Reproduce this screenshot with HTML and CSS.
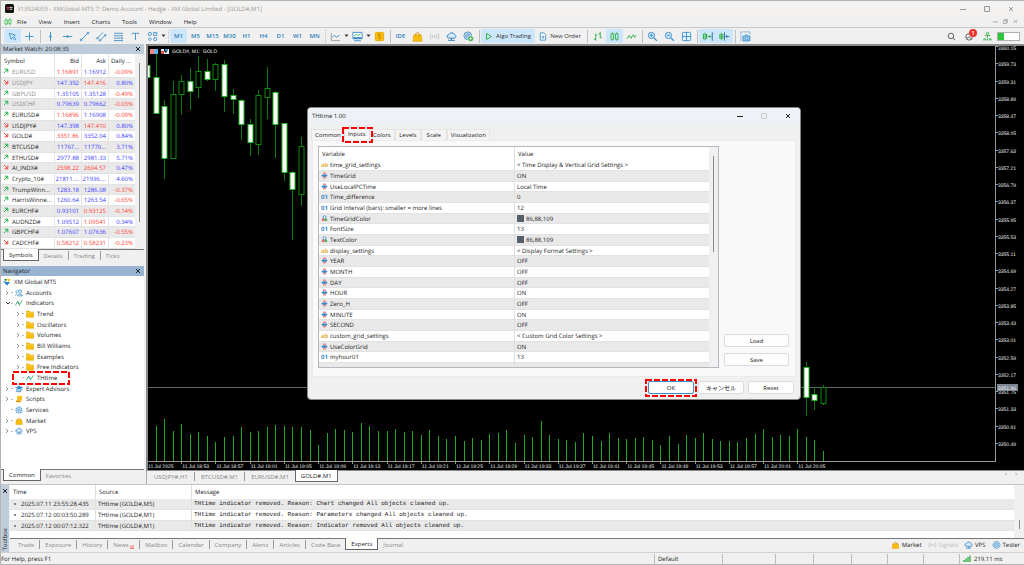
FILE: index.html
```html
<!DOCTYPE html>
<html lang="en">

<head>
    <meta charset="UTF-8">
    <meta name="viewport" content="width=device-width, initial-scale=1.0">
    <title>XMGlobal-MT5 7</title>
    <link rel="stylesheet" href="styles.css">
</head>

<body>
    <svg class="sprite" aria-hidden="true">
        <symbol id="up" viewBox="0 0 6 6"><path d="M1 5 4.6 1.4M1.6 1.2H4.8V4.4" fill="none" stroke="#22b14c"/></symbol>
        <symbol id="down" viewBox="0 0 6 6"><path d="M1 1 4.6 4.6M4.8 1.6V4.8H1.6" fill="none" stroke="#f0433a"/></symbol>
        <symbol id="close" viewBox="0 0 6 6"><path d="M1 1 5 5M5 1 1 5" fill="none" stroke="currentColor"/></symbol>
        <symbol id="min" viewBox="0 0 6 6"><path d="M0 3.5H6" stroke="currentColor"/></symbol>
        <symbol id="max" viewBox="0 0 6 6"><path d="M.5 .5H5.5V5.5H.5Z" fill="none" stroke="currentColor"/></symbol>
        <symbol id="restore" viewBox="0 0 6 6"><path d="M.5 2H4V5.5H.5ZM2 1.8V.5H5.5V4H4.2" fill="none" stroke="currentColor" stroke-width=".9"/></symbol>
        <symbol id="chev" viewBox="0 0 4 6"><path d="M1 1 3 3 1 5" fill="none" stroke="#777" stroke-width=".8"/></symbol>
        <symbol id="chevdown" viewBox="0 0 6 4"><path d="M1 1 3 3 5 1" fill="none" stroke="#333"/></symbol>
        <symbol id="caret" viewBox="0 0 5 4"><path d="M.5 .5H4.5L2.5 3Z" fill="#333"/></symbol>
        <symbol id="folder" viewBox="0 0 9 9"><path d="M.5 1H3.6L4.6 2.2H8.5V8.2H.5Z" fill="#f7bd0a" stroke="#e0a200" stroke-width=".6"/><path d="M.6 3.2H8.4" stroke="#fbe08a" stroke-width=".6"/></symbol>
        <symbol id="indicator" viewBox="0 0 9 9"><path d="M.6 6.6 3 2.6 5 6.4 8.2 1.6" fill="none" stroke="#35b04a"/><path d="M3 2.6 5 6.4" stroke="#3c87c7"/><path d="M.6 7.6H1.6M5 7.6H6" stroke="#3c87c7" stroke-width=".7"/></symbol>
        <symbol id="users" viewBox="0 0 9 9"><circle cx="5.6" cy="2.6" r="1.8" fill="#d5eafa" stroke="#3f8fca" stroke-width=".8"/><path d="M2.8 7.8C3 5 8.3 5 8.6 7.8Z" fill="#d5eafa" stroke="#3f8fca" stroke-width=".8"/><path d="M3 2A1.4 1.4 0 1 0 3 4.6M.4 7.8C.4 6.4 1.2 5.8 2.4 5.6" fill="none" stroke="#3f8fca" stroke-width=".8"/></symbol>
        <symbol id="expert" viewBox="0 0 9 9"><path d="M0 3 4.6 1 9 2.6 5 4.8Z" fill="#2f84c6"/><path d="M2 4.4V7.6H6.4V4.6" fill="#a9d3f2" stroke="#2f84c6" stroke-width=".8"/><path d="M7.8 3.4V6.4" stroke="#2f84c6" stroke-width=".7"/></symbol>
        <symbol id="script" viewBox="0 0 9 9"><path d="M2.4 1H8V6.4H2.4Z" fill="#f9c21a"/><path d="M.8 6.2H6.4V8.2H1.6Q.8 7.6 .8 6.2Z" fill="#dd9a00"/></symbol>
        <symbol id="gear" viewBox="0 0 9 9"><circle cx="4.5" cy="4.5" r="3.4" fill="#d5eafa" stroke="#3f8fca" stroke-dasharray="1.6 .7" stroke-width="1.2"/><circle cx="4.5" cy="4.5" r="1.4" fill="#fff" stroke="#3f8fca" stroke-width=".9"/></symbol>
        <symbol id="bag" viewBox="0 0 9 9"><path d="M1.4 3.2H7.6L8.2 8.4H.8Z" fill="#f9bd0c" stroke="#e09e00" stroke-width=".5"/><path d="M3 4V2.2Q4.5 0 6 2.2V4" fill="none" stroke="#d99400" stroke-width=".8"/></symbol>
        <symbol id="cloud" viewBox="0 0 10 9"><path d="M2.6 6H8A1.7 1.7 0 0 0 8 2.9 3 3 0 0 0 2.6 2.8 1.6 1.6 0 0 0 2.6 6Z" fill="#d5eafa" stroke="#3585c2" stroke-width=".9"/><path d="M5 6V8M2 8H8" stroke="#3585c2" stroke-width=".9"/></symbol>
        <symbol id="signals" viewBox="0 0 10 9"><circle cx="5" cy="4.5" r=".8" fill="#bbb"/><path d="M3.3 2.8Q2.3 4.5 3.3 6.2M6.7 2.8Q7.7 4.5 6.7 6.2M1.8 1.8Q0 4.5 1.8 7.2M8.2 1.8Q10 4.5 8.2 7.2" fill="none" stroke="#bbb" stroke-width=".7"/></symbol>
        <symbol id="tester" viewBox="0 0 9 9"><circle cx="4.5" cy="4.5" r="3.8" fill="#fff" stroke="#3585c2" stroke-width="1.1" stroke-dasharray="1.8 .5"/><rect x="2.4" y="2.4" width="4.2" height="4.2" rx="1" fill="#9fd0f5" stroke="#3585c2" stroke-width=".7"/></symbol>
        <symbol id="bool" viewBox="0 0 7 7"><path d="M2 .6H5V2.6H2ZM2 4.6H5V6.6H2Z" fill="#ef8d92"/><path d="M.4 3.6 1.6 2.4H5.4L6.6 3.6 5.4 4.8H1.6Z" fill="#3b87c9"/></symbol>
        <symbol id="rgb" viewBox="0 0 7 7"><circle cx="3.5" cy="2.3" r="1.5" fill="#fff" stroke="#3b87c9" stroke-width=".9"/><circle cx="2.2" cy="4.7" r="1.5" fill="#e8696c"/><circle cx="4.9" cy="4.7" r="1.5" fill="#54b368"/></symbol>
    </svg>

    <header class="titlebar">
        <svg class="app-logo" viewBox="0 0 9 9"><rect width="9" height="9" rx="1.5" fill="#111"/><path d="M1.5 3.4H4.5M1.5 5H4" stroke="#d33" stroke-width="1"/><path d="M4.6 3.4H7.6M4.6 5.2H7.4" stroke="#ddd" stroke-width="1"/></svg>
        <span>313924059 - XMGlobal-MT5 7: Demo Account - Hedge - XM Global Limited - [GOLD#,M1]</span>
        <div class="win-buttons">
            <button aria-label="Minimize"><svg><use href="#min"/></svg></button>
            <button aria-label="Maximize"><svg><use href="#max"/></svg></button>
            <button aria-label="Close"><svg><use href="#close"/></svg></button>
        </div>
    </header>

    <nav class="menubar">
        <svg class="menu-logo" viewBox="0 0 8 8"><path d="M1 2H3.4V6H1ZM4.8 1.6H7V5.6H4.8ZM2.2 .6V2M2.2 6V7.6M5.9 .2V1.6M5.9 5.6V7.4" fill="none" stroke="#35c04a" stroke-width=".8"/></svg>
        <button>File</button>
        <button>View</button>
        <button>Insert</button>
        <button>Charts</button>
        <button>Tools</button>
        <button>Window</button>
        <button>Help</button>
        <div class="mdi-buttons">
            <button aria-label="Minimize chart"><svg><use href="#min"/></svg></button>
            <button aria-label="Restore chart"><svg><use href="#restore"/></svg></button>
            <button aria-label="Close chart"><svg><use href="#close"/></svg></button>
        </div>
    </nav>

    <div class="toolbar">
        <button class="tool active" aria-label="Cursor"><svg viewBox="0 0 12 12"><path d="M2.5 2.5 9 4.5 7.2 6 9.6 8.6 8.4 9.8 6 7.2 4.6 9Z"/></svg></button>
        <button class="tool" aria-label="Crosshair"><svg viewBox="0 0 12 12"><path d="M6 1.5V10.5M1.5 6H10.5"/></svg></button>
        <span class="sep"></span>
        <button class="tool" aria-label="Vertical line"><svg viewBox="0 0 12 12"><path d="M6 1V11"/><circle cx="6" cy="6" r="1"/></svg></button>
        <button class="tool" aria-label="Horizontal line"><svg viewBox="0 0 12 12"><path d="M1 6H11"/><circle cx="6" cy="6" r="1"/></svg></button>
        <button class="tool" aria-label="Trendline"><svg viewBox="0 0 12 12"><path d="M2.4 9.6 9.6 2.4"/><circle cx="2.2" cy="9.8" r="1"/><circle cx="9.8" cy="2.2" r="1"/></svg></button>
        <button class="tool" aria-label="Channel"><svg viewBox="0 0 12 12"><path d="M1.6 7.6 7.6 1.6M4.4 10.4 10.4 4.4"/><circle cx="1.6" cy="7.8" r=".9"/><circle cx="4.4" cy="10.2" r=".9"/><circle cx="10.2" cy="4.6" r=".9"/></svg></button>
        <button class="tool" aria-label="Fibonacci"><svg viewBox="0 0 12 12"><path d="M1 2.5H11M1 5.2H11M1 7.8H8M1 10.5H11M10 7.8V8.4"/><circle cx="9.6" cy="7.8" r=".8"/></svg></button>
        <button class="tool" aria-label="Text"><svg viewBox="0 0 12 12"><path d="M2.5 3.5V2.5H9.5V3.5M6 2.5V10"/></svg></button>
        <button class="tool" aria-label="Shapes"><svg viewBox="0 0 12 12"><circle cx="3.2" cy="3.2" r="1.7"/><path d="M7.2 1.6H10.6V4.8H7.2ZM3.2 7.2 5 8.8 3.2 10.5 1.4 8.8Z"/><circle cx="8.9" cy="8.8" r="1.7"/></svg></button>
        <svg class="caret"><use href="#caret"/></svg>
        <span class="sep dotted"></span>
        <button class="tool active">M1</button>
        <button class="tool">M5</button>
        <button class="tool">M15</button>
        <button class="tool">M30</button>
        <button class="tool">H1</button>
        <button class="tool">H4</button>
        <button class="tool">D1</button>
        <button class="tool">W1</button>
        <button class="tool">MN</button>
        <span class="sep dotted"></span>
        <button class="tool" aria-label="Chart type"><svg viewBox="0 0 12 12"><path d="M1.5 2V10.5H11" stroke="#999"/><path d="M2.5 7 4.6 4.6 7 6.8 10.4 4.4"/></svg></button>
        <svg class="caret"><use href="#caret"/></svg>
        <button class="tool" aria-label="Templates"><svg viewBox="0 0 12 12"><path d="M1 1.5H11V8.5H1ZM2.4 10.6H9.6" fill="#fff"/><path d="M1.5 7.6H10.5" stroke-width="2"/><path d="M2.5 5.2 4.8 3.6 6.8 5 9.4 3.2" stroke="#35b04a"/></svg></button>
        <svg class="caret"><use href="#caret"/></svg>
        <button class="tool" aria-label="Symbols"><svg viewBox="0 0 12 12"><rect x="1.5" y="1.5" width="9" height="9" rx="1" fill="#f9bd0c" stroke="#e6a800"/><path d="M8 4Q4 2.6 4.2 4.8 8 6 7.8 7.6 6.6 9 4 7.8M6 2.4V9.6" stroke="#c98c00" stroke-width=".8"/></svg></button>
        <span class="sep"></span>
        <button class="tool">IDE</button>
        <button class="tool" aria-label="Market"><svg viewBox="0 0 9 9"><use href="#bag"/></svg></button>
        <button class="tool" aria-label="Signals"><svg viewBox="0 0 10 9"><use href="#signals"/></svg></button>
        <button class="tool" aria-label="VPS"><svg viewBox="0 0 10 9"><use href="#cloud"/></svg></button>
        <button class="tool" aria-label="Network"><svg viewBox="0 0 12 12"><circle cx="5.2" cy="5.2" r="4.2"/><circle cx="5.2" cy="5.2" r="2.4"/><circle cx="5.2" cy="5.2" r=".8"/><circle cx="8.4" cy="8.4" r="3" fill="#35b04a" stroke="#f0f0f0" stroke-width=".6"/><path d="M8.4 6.8V10M6.8 8.4H10" stroke="#fff" stroke-width=".8"/></svg></button>
        <span class="sep"></span>
        <button class="tool wide active"><svg viewBox="0 0 8 8"><path d="M1.5 1 6.5 4 1.5 7Z" stroke="#35b04a"/></svg>Algo Trading</button>
        <button class="tool wide order"><svg viewBox="0 0 8 10"><path d="M1 1H5L7 3V9H1Z" fill="#fff"/><path d="M4 4V7.4M2.3 5.7H5.7"/></svg>New Order</button>
        <span class="sep"></span>
        <button class="tool green" aria-label="Bar chart"><svg viewBox="0 0 12 12"><path d="M4 3V10.5M2 9H4M4 4.4H5.6M9 1V8M7.2 3H9M9 7H10.8"/></svg></button>
        <button class="tool green active" aria-label="Candlesticks"><svg viewBox="0 0 12 12"><path d="M2.2 3H5V9H2.2ZM7 3H9.8V9H7ZM3.6 1.4V3M3.6 9V10.6M8.4 1.4V3M8.4 9V10.6"/></svg></button>
        <button class="tool green" aria-label="Line chart"><svg viewBox="0 0 12 12"><path d="M1 8.6 3.6 4.8 5.4 8 8 4 9.4 7 11 4.6"/></svg></button>
        <span class="sep"></span>
        <button class="tool" aria-label="Zoom in"><svg viewBox="0 0 12 12"><circle cx="4.8" cy="4.8" r="3.4" fill="#cfe7f9"/><path d="M7.4 7.4 10.8 10.8" stroke-width="1.4"/><path d="M3 4.8H6.6M4.8 3V6.6"/></svg></button>
        <button class="tool" aria-label="Zoom out"><svg viewBox="0 0 12 12"><circle cx="4.8" cy="4.8" r="3.4" fill="#cfe7f9"/><path d="M7.4 7.4 10.8 10.8" stroke-width="1.4"/><path d="M3 4.8H6.6"/></svg></button>
        <button class="tool" aria-label="Tile windows"><svg viewBox="0 0 12 12"><rect x="1.5" y="1.5" width="9" height="9" rx="1" fill="#e4f2fc"/><path d="M6 1.5V10.5M1.5 6H10.5"/></svg></button>
        <span class="sep"></span>
        <button class="tool active" aria-label="Auto scroll"><svg viewBox="0 0 12 12"><path d="M1.6 3V9M3.4 2V10M5 3.4V8.6" stroke="#35b04a" stroke-width="1.2"/><path d="M6 6H9.6M8.2 4.4 9.8 6 8.2 7.6" stroke="#35b04a"/><path d="M11.2 1.4V10.6" stroke="#2d6f9e"/></svg></button>
        <button class="tool active" aria-label="Chart shift"><svg viewBox="0 0 12 12"><path d="M1 3.4V8.6M2.6 2V10M4.2 3.4V8.6" stroke="#35b04a" stroke-width="1.2"/><path d="M6 1.4V10.6M7.4 6H11.4M9 4.4 7.4 6 9 7.6" stroke="#2d6f9e"/></svg></button>
        <span class="sep"></span>
        <button class="tool" aria-label="Screenshot"><svg viewBox="0 0 12 12"><path d="M1 10.5V1H11V3.6" stroke-dasharray="1.2 .9"/><path d="M3.2 5.6H5L5.8 4.4H8L8.8 5.6H10.8V10.8H3.2Z" fill="#8cc4ee"/><circle cx="7" cy="8" r="1.3" fill="#fff"/></svg></button>
        <div class="toolbar-right">
            <button class="tool dark" aria-label="Search"><svg viewBox="0 0 12 12"><circle cx="5.4" cy="5.4" r="3"/><path d="M7.6 7.6 10 10"/></svg></button>
            <button class="tool dark bell" aria-label="Notifications"><svg viewBox="0 0 12 12"><circle cx="5.6" cy="6.4" r="3.6"/><path d="M3 8 5.6 6.4 8 8.4"/></svg><span class="badge">1</span></button>
            <button class="tool green" aria-label="Connection"><svg viewBox="0 0 12 12"><circle cx="6" cy="2.6" r="1.2"/><path d="M3 4.8H9M6 4.6V7.4M2 10.4V8.6H4.2V10.4M7.8 10.4V8.6H10V10.4M6 8.6V10.4"/></svg></button>
            <span class="battery" role="img" aria-label="Load 28%"></span>
        </div>
    </div>

    <main class="workspace">
        <aside class="side">
            <section class="panel market">
                <h2 class="panel-title">Market Watch: 20:08:35<button aria-label="Close Market Watch"><svg><use href="#close"/></svg></button></h2>
                <div class="market-body">
                    <table class="quotes">
                        <thead>
                            <tr><th class="symbol">Symbol</th><th>Bid</th><th>Ask</th><th class="daily">Daily ...</th></tr>
                        </thead>
                        <tbody>
                            <tr><td class="idle"><svg><use href="#up"/></svg>EURUSD</td><td class="dn">1.16891</td><td>1.16912</td><td class="dn">-0.09%</td></tr>
                            <tr><td class="idle"><svg><use href="#down"/></svg>USDJPY</td><td>147.392</td><td class="dn">147.416</td><td>0.80%</td></tr>
                            <tr><td class="idle"><svg><use href="#up"/></svg>GBPUSD</td><td>1.35105</td><td>1.35128</td><td class="dn">-0.49%</td></tr>
                            <tr><td class="idle"><svg><use href="#up"/></svg>USDCHF</td><td>0.79639</td><td>0.79662</td><td class="dn">-0.03%</td></tr>
                            <tr><td><svg><use href="#up"/></svg>EURUSD#</td><td class="dn">1.16896</td><td>1.16908</td><td class="dn">-0.09%</td></tr>
                            <tr><td><svg><use href="#down"/></svg>USDJPY#</td><td>147.398</td><td class="dn">147.410</td><td>0.80%</td></tr>
                            <tr><td><svg><use href="#down"/></svg>GOLD#</td><td class="dn">3351.86</td><td>3352.04</td><td>0.84%</td></tr>
                            <tr><td><svg><use href="#up"/></svg>BTCUSD#</td><td>11767...</td><td>11770...</td><td>3.71%</td></tr>
                            <tr><td><svg><use href="#up"/></svg>ETHUSD#</td><td>2977.88</td><td>2981.33</td><td>5.71%</td></tr>
                            <tr><td><svg><use href="#down"/></svg>AI_INDX#</td><td class="dn">2598.22</td><td class="dn">2604.57</td><td>0.47%</td></tr>
                            <tr><td><svg><use href="#up"/></svg>Crypto_10#</td><td>21811....</td><td>21936....</td><td>4.60%</td></tr>
                            <tr><td><svg><use href="#up"/></svg>TrumpWinn...</td><td>1283.18</td><td>1286.08</td><td class="dn">-0.37%</td></tr>
                            <tr><td><svg><use href="#up"/></svg>HarrisWinne...</td><td>1260.64</td><td>1263.54</td><td class="dn">-0.65%</td></tr>
                            <tr><td><svg><use href="#up"/></svg>EURCHF#</td><td>0.93101</td><td class="dn">0.93125</td><td class="dn">-0.14%</td></tr>
                            <tr><td><svg><use href="#up"/></svg>AUDNZD#</td><td>1.09512</td><td class="dn">1.09541</td><td>0.34%</td></tr>
                            <tr><td><svg><use href="#up"/></svg>GBPCHF#</td><td>1.07607</td><td>1.07636</td><td class="dn">-0.55%</td></tr>
                            <tr><td><svg><use href="#down"/></svg>CADCHF#</td><td class="dn">0.58212</td><td class="dn">0.58231</td><td class="dn">-0.23%</td></tr>
                        </tbody>
                    </table>
                    <div class="scroll"><span class="thumb market-thumb"></span></div>
                </div>
                <div class="tabs">
                    <button class="tab active">Symbols</button>
                    <button class="tab">Details</button>
                    <button class="tab">Trading</button>
                    <button class="tab">Ticks</button>
                </div>
            </section>

            <section class="panel navigator">
                <h2 class="panel-title blue">Navigator<button aria-label="Close Navigator"><svg><use href="#close"/></svg></button></h2>
                <ul class="tree">
                    <li class="root"><svg class="ico" viewBox="0 0 9 9"><path d="M1 1H5L3 4Z" fill="#35b04a"/><path d="M4.6 1H8.6L6.4 4.6Z" fill="#f7bd0a"/><path d="M0 3 4 4.4 8 4.6 4.4 8.8Z" fill="#2f84c6"/></svg>XM Global MT5</li>
                    <li><svg class="exp"><use href="#chev"/></svg><i></i><svg class="ico"><use href="#users"/></svg>Accounts</li>
                    <li><svg class="exp open"><use href="#chevdown"/></svg><i></i><svg class="ico"><use href="#indicator"/></svg>Indicators</li>
                    <li class="sub"><svg class="exp"><use href="#chev"/></svg><i></i><svg class="ico"><use href="#folder"/></svg>Trend</li>
                    <li class="sub"><svg class="exp"><use href="#chev"/></svg><i></i><svg class="ico"><use href="#folder"/></svg>Oscillators</li>
                    <li class="sub"><svg class="exp"><use href="#chev"/></svg><i></i><svg class="ico"><use href="#folder"/></svg>Volumes</li>
                    <li class="sub"><svg class="exp"><use href="#chev"/></svg><i></i><svg class="ico"><use href="#folder"/></svg>Bill Williams</li>
                    <li class="sub"><svg class="exp"><use href="#chev"/></svg><i></i><svg class="ico"><use href="#folder"/></svg>Examples</li>
                    <li class="sub"><svg class="exp"><use href="#chev"/></svg><i></i><svg class="ico"><use href="#folder"/></svg>Free Indicators</li>
                    <li class="sub marked"><svg class="exp"></svg><i></i><svg class="ico"><use href="#indicator"/></svg>THtime<svg class="mark mark-tree"><rect x="1" y="1"/></svg></li>
                    <li><svg class="exp"><use href="#chev"/></svg><i></i><svg class="ico"><use href="#expert"/></svg>Expert Advisors</li>
                    <li><svg class="exp"><use href="#chev"/></svg><i></i><svg class="ico"><use href="#script"/></svg>Scripts</li>
                    <li><svg class="exp"></svg><i></i><svg class="ico"><use href="#gear"/></svg>Services</li>
                    <li><svg class="exp"><use href="#chev"/></svg><i></i><svg class="ico"><use href="#bag"/></svg>Market</li>
                    <li><svg class="exp"><use href="#chev"/></svg><i></i><svg class="ico"><use href="#cloud"/></svg>VPS</li>
                </ul>
                <div class="tabs">
                    <button class="tab active">Common</button>
                    <button class="tab">Favorites</button>
                </div>
            </section>
        </aside>

        <section class="chart-area">
            <div class="chart-frame">
                <svg id="chart" viewBox="0 0 876 425" preserveAspectRatio="xMinYMin slice"></svg>
            </div>
            <div class="chart-tabs">
                <button class="tab">USDJPY#,H1</button>
                <button class="tab">BTCUSD#,M1</button>
                <button class="tab">EURUSD#,M1</button>
                <button class="tab active">GOLD#,M1</button>
                <span class="arrows"><span>‹</span><span>›</span></span>
            </div>
        </section>
    </main>

    <section class="toolbox">
        <div class="strip"><button aria-label="Close Toolbox"><svg><use href="#close"/></svg></button><span>Toolbox</span></div>
        <div class="toolbox-main">
            <div class="log-wrap">
                <table class="log">
                    <thead>
                        <tr><th class="time">Time</th><th class="source">Source</th><th>Message</th></tr>
                    </thead>
                    <tbody>
                        <tr><td>2025.07.11 23:55:28.435</td><td>THtime (GOLD#,M5)</td><td>THtime indicator removed. Reason: Chart changed All objects cleaned up.</td></tr>
                        <tr><td>2025.07.12 00:03:50.289</td><td>THtime (GOLD#,M1)</td><td>THtime indicator removed. Reason: Parameters changed All objects cleaned up.</td></tr>
                        <tr><td>2025.07.12 00:07:12.322</td><td>THtime (GOLD#,M1)</td><td>THtime indicator removed. Reason: Indicator removed All objects cleaned up.</td></tr>
                    </tbody>
                </table>
                <div class="scroll"><span class="thumb log-thumb"></span></div>
            </div>
            <div class="tabs">
                <button class="tab">Trade</button>
                <button class="tab">Exposure</button>
                <button class="tab">History</button>
                <button class="tab">News<sub class="count">99</sub></button>
                <button class="tab">Mailbox</button>
                <button class="tab">Calendar</button>
                <button class="tab">Company</button>
                <button class="tab">Alerts</button>
                <button class="tab">Articles</button>
                <button class="tab">Code Base</button>
                <button class="tab active">Experts</button>
                <button class="tab">Journal</button>
                <div class="links">
                    <a href="#market"><svg><use href="#bag"/></svg>Market</a>
                    <a href="#signals" class="off"><svg><use href="#signals"/></svg>Signals</a>
                    <a href="#vps"><svg><use href="#cloud"/></svg>VPS</a>
                    <a href="#tester"><svg><use href="#tester"/></svg>Tester</a>
                </div>
            </div>
        </div>
    </section>

    <footer class="status">
        <span class="help">For Help, press F1</span>
        <span class="cell w68">Default</span>
        <span class="cell w53"></span>
        <span class="cell w38"></span>
        <span class="cell w38"></span>
        <span class="cell w36"></span>
        <span class="cell w36"></span>
        <span class="cell w36"></span>
        <span class="cell ping"><svg viewBox="0 0 8 7"><path d="M1 5V7M3 3.6V7M5 2V7M7 .4V7" stroke="#35b04a" stroke-width="1.4"/></svg>219.11 ms</span>
    </footer>

    <div class="dialog" role="dialog" aria-label="THtime 1.00">
        <div class="dialog-title">
            <span>THtime 1.00</span>
            <div class="win-buttons">
                <button aria-label="Minimize dialog"><svg><use href="#min"/></svg></button>
                <button class="off" aria-label="Maximize dialog" disabled><svg><use href="#max"/></svg></button>
                <button aria-label="Close dialog"><svg><use href="#close"/></svg></button>
            </div>
        </div>
        <div class="dialog-tabs">
            <button>Common</button>
            <button class="active">Inputs<svg class="mark mark-tab"><rect x="1" y="1"/></svg></button>
            <button>Colors</button>
            <button>Levels</button>
            <button>Scale</button>
            <button>Visualization</button>
        </div>
        <div class="dialog-page">
            <div class="inputs-wrap">
                <table class="inputs">
                    <thead>
                        <tr><th class="variable">Variable</th><th>Value</th></tr>
                    </thead>
                    <tbody>
                        <tr><td><b class="type string">ab</b>time_grid_settings</td><td>&lt; Time Display &amp; Vertical Grid Settings &gt;</td></tr>
                        <tr><td><svg><use href="#bool"/></svg>TimeGrid</td><td>ON</td></tr>
                        <tr><td><svg><use href="#bool"/></svg>UseLocalPCTime</td><td>Local Time</td></tr>
                        <tr><td><b class="type">01</b>Time_difference</td><td>0</td></tr>
                        <tr><td><b class="type">01</b>Grid Interval (bars): smaller = more lines</td><td>12</td></tr>
                        <tr><td><svg><use href="#rgb"/></svg>TimeGridColor</td><td><span class="swatch"></span>86,88,109</td></tr>
                        <tr><td><b class="type">01</b>FontSize</td><td>13</td></tr>
                        <tr><td><svg><use href="#rgb"/></svg>TextColor</td><td><span class="swatch"></span>86,88,109</td></tr>
                        <tr><td><b class="type string">ab</b>display_settings</td><td>&lt; Display Format Settings &gt;</td></tr>
                        <tr><td><svg><use href="#bool"/></svg>YEAR</td><td>OFF</td></tr>
                        <tr><td><svg><use href="#bool"/></svg>MONTH</td><td>OFF</td></tr>
                        <tr><td><svg><use href="#bool"/></svg>DAY</td><td>OFF</td></tr>
                        <tr><td><svg><use href="#bool"/></svg>HOUR</td><td>ON</td></tr>
                        <tr><td><svg><use href="#bool"/></svg>Zero_H</td><td>OFF</td></tr>
                        <tr><td><svg><use href="#bool"/></svg>MINUTE</td><td>ON</td></tr>
                        <tr><td><svg><use href="#bool"/></svg>SECOND</td><td>OFF</td></tr>
                        <tr><td><b class="type string">ab</b>custom_grid_settings</td><td>&lt; Custom Grid Color Settings &gt;</td></tr>
                        <tr><td><svg><use href="#bool"/></svg>UseColorGrid</td><td>ON</td></tr>
                        <tr><td><b class="type">01</b>myhour01</td><td>13</td></tr>
                        <tr><td></td><td></td></tr>
                    </tbody>
                </table>
                <div class="scroll"><span class="thumb inputs-thumb"></span></div>
            </div>
            <div class="page-buttons">
                <button class="btn">Load</button>
                <button class="btn">Save</button>
            </div>
        </div>
        <div class="dialog-actions">
            <button class="btn primary">OK<svg class="mark mark-ok"><rect x="1" y="1"/></svg></button>
            <button class="btn">キャンセル</button>
            <button class="btn">Reset</button>
        </div>
    </div>

    <script src="chart.js"></script>
</body>

</html>
```

FILE: styles.css
```css
* {
    box-sizing: border-box;
}

body {
    margin: 0;
    height: 100vh;
    display: flex;
    flex-direction: column;
    position: relative;
    overflow: hidden;
    background-color: #f0f0f0;
    border: 1px solid #b4b4b4;
    border-width: 1px 0 1px 1px;
    font-family: "Open Sans", "Noto Sans", "Noto Sans CJK JP", sans-serif;
    font-size: 6px;
    line-height: 8px;
    color: #222;
    text-rendering: geometricPrecision;
}

button {
    font: inherit;
    color: inherit;
    background: none;
    border: none;
    padding: 0;
    margin: 0;
    display: flex;
    align-items: center;
    justify-content: center;
    white-space: nowrap;
}

svg {
    display: block;
    flex: none;
}

.sprite {
    position: absolute;
    width: 0;
    height: 0;
}

/* title and menu */

.titlebar {
    display: flex;
    align-items: center;
    height: 15px;
    padding: 0 6px 0 4px;
    gap: 3px;
    background-color: #f3f2f0;
    color: #999;
}

.app-logo {
    width: 9px;
    height: 9px;
}

.win-buttons {
    display: flex;
    gap: 18px;
    margin-left: auto;
}

.win-buttons svg,
.panel-title svg,
.strip svg {
    width: 6px;
    height: 6px;
}

.titlebar .win-buttons {
    padding-right: 4px;
}

.menubar {
    display: flex;
    align-items: center;
    height: 11px;
    gap: 12px;
    padding: 0 6px 0 3px;
}

.menu-logo {
    width: 8px;
    height: 8px;
    margin-right: -7px;
}

.mdi-buttons {
    display: flex;
    gap: 5px;
    margin-left: auto;
    color: #999;
}

.mdi-buttons svg {
    width: 5px;
    height: 5px;
}

/* toolbar */

.toolbar {
    display: flex;
    align-items: center;
    height: 17px;
    padding-left: 3px;
    border-top: 1px solid #c8c8c8;
    color: #2f7db8;
}

.tool {
    width: 17px;
    height: 14px;
    border-radius: 1px;
    font-weight: 600;
}

.tool.active {
    background-color: #cce6fb;
}

.tool svg {
    width: 11px;
    height: 11px;
    fill: none;
    stroke: #3f8fca;
    stroke-width: 1;
}

.tool use {
    stroke: none;
}

.tool.green svg {
    stroke: #35b04a;
}

.tool.dark svg {
    stroke: #555;
}

.tool.wide {
    width: 54px;
    gap: 3px;
    color: #333;
    font-weight: normal;
}

.tool.wide svg {
    width: 8px;
    height: 9px;
}

.tool.order {
    width: 50px;
}

.sep {
    width: 1px;
    height: 13px;
    margin: 0 1px 0 2px;
    background-color: #c0c0c0;
}

.sep.dotted {
    background: none;
    border-left: 1px dotted #c0c0c0;
}

.caret {
    width: 5px;
    height: 4px;
}

.toolbar-right {
    display: flex;
    align-items: center;
    margin-left: auto;
    padding-right: 4px;
    gap: 1px;
}

.bell {
    position: relative;
}

.badge {
    position: absolute;
    right: 1px;
    top: 0;
    width: 8px;
    height: 8px;
    border-radius: 50%;
    background-color: #e8322a;
    color: #fff;
    text-align: center;
}

.battery {
    width: 23px;
    height: 9px;
    border: 1px solid #b0b0b0;
    background: linear-gradient(90deg, #2fc53b 28%, #fff 28%);
}

/* side panels */

.workspace {
    display: flex;
    flex: 1;
    min-height: 0;
}

.side {
    display: flex;
    flex-direction: column;
    width: 143px;
    gap: 4px;
}

.panel {
    display: flex;
    flex-direction: column;
}

.navigator {
    flex: 1;
}

.panel-title {
    display: flex;
    align-items: center;
    justify-content: space-between;
    height: 10px;
    margin: 0;
    padding: 0 3px 0 2px;
    font-size: 6px;
    font-weight: normal;
    background-color: #bfcddb;
    color: #222;
}

.panel-title.blue {
    background-color: #99b4d1;
}

.market-body {
    display: flex;
    background-color: #f0f0f0;
}

table {
    border-collapse: separate;
    border-spacing: 0;
    table-layout: fixed;
}

th,
td {
    padding: 0;
    text-align: left;
    font-weight: normal;
    white-space: nowrap;
    overflow: hidden;
    line-height: 8px;
}

thead th {
    height: 13px;
    background-color: #fff;
}

tbody td {
    height: 11px;
    background-color: #fff;
    border-bottom: 1px solid #e2e2e2;
}

tbody tr:nth-child(3n) td {
    height: 10px;
}

.quotes tr:nth-child(even) td,
.inputs tr:nth-child(even) td,
.log tbody tr:nth-child(odd) td {
    background-color: #e9e9e9;
}

.quotes {
    width: 134px;
}

.quotes th,
.quotes td {
    width: 27px;
    padding-right: 2px;
    text-align: right;
}

.quotes th + th,
.quotes td + td {
    border-left: 1px solid #e4e4e4;
}

.quotes td {
    color: #3b3bff;
}

.quotes .dn {
    color: #ff3b30;
}

.quotes th.symbol {
    width: 53px;
    padding-left: 3px;
    text-align: left;
}

.quotes th.daily {
    text-align: center;
}

.quotes td:first-child {
    padding: 0 0 0 2px;
    text-align: left;
    color: #222;
}

.quotes td.idle {
    color: #8a8a8a;
}

.quotes td svg {
    display: inline-block;
    width: 6px;
    height: 6px;
    margin-right: 3px;
}

.scroll {
    display: flex;
    justify-content: center;
    flex: 1;
}

.thumb {
    width: 1px;
    background-color: #8a8a8a;
}

.market-thumb {
    height: 159px;
    margin-top: 9px;
}

.tabs {
    display: flex;
    align-items: flex-start;
    height: 13px;
    border-top: 1px solid #777;
    padding-left: 2px;
}

.tab {
    position: relative;
    height: 11px;
    padding: 0 5px;
    color: #888;
}

.tab:not(.active) + .tab:not(.active) {
    border-left: 1px solid;
    border-image: linear-gradient(transparent 20%, #999 20%, #999 80%, transparent 80%) 1;
}

.tab.active {
    margin-top: -1px;
    height: 12px;
    background-color: #fff;
    color: #222;
    border: 1px solid #666;
    border-top: none;
}

.tree {
    list-style: none;
    margin: 0;
    padding: 0;
    flex: 1;
    background-color: #fff;
}

.tree li {
    display: flex;
    align-items: center;
    height: 11px;
    padding-left: 4px;
}

.tree li:nth-child(3n) {
    height: 10px;
}

.tree li.root {
    padding-left: 2px;
}

.tree li.sub {
    padding-left: 15px;
}

.tree li.marked {
    position: relative;
}

.tree .exp {
    width: 4px;
    height: 6px;
    margin-right: 2px;
}

.tree .exp.open {
    width: 6px;
    height: 4px;
    margin-right: 0;
}

.tree i {
    width: 2px;
    margin-right: 2px;
    border-top: 1px solid #bbb;
}

.tree .ico {
    width: 8px;
    height: 8px;
    margin-right: 3px;
}

.mark {
    position: absolute;
    overflow: visible;
    fill: none;
    stroke: #f00;
    stroke-width: 2;
    stroke-dasharray: 6 2;
}

.mark rect {
    width: calc(100% - 2px);
    height: calc(100% - 2px);
}

.mark-tree {
    left: 11px;
    top: -1px;
    width: 58px;
    height: 14px;
}

.navigator .tabs {
    height: 15px;
}

/* chart */

.chart-area {
    display: flex;
    flex-direction: column;
    flex: 1;
    margin-left: 2px;
    min-width: 0;
}

.chart-frame {
    flex: 1;
    min-height: 0;
    background-color: #000;
    border: 2px solid #8a8a8a;
    border-width: 2px 0 1px 2px;
}

#chart {
    width: 100%;
    height: 100%;
}

#chart text {
    font-family: "Liberation Sans", sans-serif;
    font-size: 5px;
    fill: #eee;
}

.chart-tabs {
    display: flex;
    align-items: flex-start;
    height: 13px;
    padding-left: 1px;
    border-left: 1px solid #aaa;
}

.chart-tabs .tab:not(.active) {
    padding: 0 6px;
}

.arrows {
    display: flex;
    gap: 8px;
    margin-left: auto;
    padding-right: 7px;
    font-size: 7px;
    color: #999;
}

/* toolbox */

.toolbox {
    display: flex;
    height: 68px;
    border-top: 1px solid #c4c4c4;
}

.strip {
    display: flex;
    flex-direction: column;
    align-items: center;
    justify-content: space-between;
    width: 8px;
    padding: 3px 0 2px;
    background-color: #bfcddb;
}

.strip span {
    writing-mode: vertical-rl;
    transform: rotate(180deg);
}

.toolbox-main {
    display: flex;
    flex-direction: column;
    flex: 1;
    margin-left: 1px;
}

.log-wrap {
    display: flex;
    align-items: flex-start;
    flex: 1;
    background-color: #fff;
}

.log {
    width: calc(100% - 10px);
}

.log th {
    height: 14px;
    padding-left: 3px;
}

.log th.time {
    width: 85px;
}

.log th.source {
    width: 96px;
}

.log td {
    padding-left: 2px;
}

.log td:first-child {
    padding-left: 11px;
    background-image: radial-gradient(circle at 5px 5px, #888 1px, transparent 1px);
}

.log td:last-child {
    font-family: "Liberation Mono", monospace;
}

.log th + th,
.log td + td {
    border-left: 1px solid #e0e0e0;
}

.log-wrap .scroll {
    align-self: stretch;
    background-color: #f0f0f0;
}

.log-thumb {
    height: 9px;
    margin-top: 35px;
}

.count {
    margin-left: 1px;
    font-size: 4px;
    line-height: 4px;
    align-self: flex-end;
    margin-bottom: 1px;
    background-color: #f58080;
    color: #fff;
}

.toolbox .tabs {
    height: 14px;
    padding-left: 3px;
}

.links {
    display: flex;
    align-items: center;
    gap: 6px;
    height: 12px;
    margin-left: auto;
    padding-right: 4px;
}

.links a {
    display: flex;
    align-items: center;
    gap: 2px;
    color: #222;
    text-decoration: none;
}

.links a.off {
    color: #bbb;
}

.links svg {
    width: 9px;
    height: 8px;
}

.status {
    display: flex;
    align-items: center;
    height: 12px;
    border-top: 1px solid #d0d0d0;
    color: #222;
}

.help {
    flex: 1;
}

.cell {
    display: flex;
    align-items: center;
    height: 10px;
    padding-left: 3px;
    border-left: 1px solid #bbb;
}

.w68 {
    width: 68px;
}

.w53 {
    width: 53px;
}

.w38 {
    width: 38px;
}

.w36 {
    width: 36px;
}

.ping {
    width: 65px;
    gap: 3px;
}

.ping svg {
    width: 8px;
    height: 7px;
}

/* indicator dialog */

.dialog {
    position: absolute;
    left: 306px;
    top: 106px;
    width: 494px;
    display: flex;
    flex-direction: column;
    padding-bottom: 5px;
    background-color: #f0f0f0;
    border: 1px solid #888;
    border-radius: 4px;
    overflow: hidden;
}

.dialog-title {
    display: flex;
    align-items: center;
    height: 16px;
    padding: 0 9px 0 4px;
    background-color: #eef2f6;
}

.dialog-title .off {
    color: #ccc;
}

.dialog-tabs {
    display: flex;
    align-items: flex-end;
    height: 16px;
    padding-left: 3px;
}

.dialog-tabs button {
    position: relative;
    height: 11px;
    min-width: 26px;
    padding: 0 3px;
    background-color: #f4f4f4;
    border: 1px solid #e4e4e4;
    border-bottom: none;
}

.dialog-tabs .active {
    height: 13px;
    margin: 0 -1px;
    background-color: #f9f9f9;
    z-index: 1;
}

.mark-tab {
    left: -3px;
    top: -1px;
    width: 31px;
    height: 16px;
}

.dialog-page {
    display: flex;
    margin: 0 4px;
    padding: 5px 6px 8px 5px;
    gap: 5px;
    background-color: #f9f9f9;
    border: 1px solid #ebebeb;
}

.inputs-wrap {
    display: flex;
    flex: 1;
    height: 222px;
    overflow: hidden;
    background-color: #f0f0f0;
    border: 1px solid #b4b7bf;
}

.inputs {
    width: 390px;
    align-self: flex-start;
}

.inputs th {
    padding-left: 3px;
}

.inputs th.variable {
    width: 195px;
}

.inputs td {
    padding-left: 2px;
}

.inputs td + td,
.inputs th + th {
    border-left: 1px solid #e0e0e0;
}

.inputs svg {
    display: inline-block;
    width: 7px;
    height: 7px;
    margin-right: 2px;
    vertical-align: -1px;
}

.type {
    display: inline-block;
    width: 9px;
    color: #3b87c9;
}

.type.string {
    color: #e3b04c;
}

.inputs-thumb {
    height: 96px;
    margin-top: 9px;
}

.swatch {
    display: inline-block;
    width: 7px;
    height: 7px;
    margin-right: 2px;
    vertical-align: -1px;
    background-color: #56606a;
}

.page-buttons {
    display: flex;
    flex-direction: column;
    justify-content: flex-end;
    gap: 6px;
    width: 65px;
    padding-bottom: 2px;
}

.btn {
    height: 13px;
    background-color: #fdfdfd;
    border: 1px solid #dcdcdc;
    border-radius: 2px;
}

.dialog-actions {
    display: flex;
    justify-content: flex-end;
    gap: 4px;
    padding: 4px 6px 0 0;
}

.dialog-actions .btn {
    position: relative;
    width: 46px;
}

.btn.primary {
    border-color: #3f8fd0;
}

.mark-ok {
    left: -4px;
    top: -3px;
    width: 52px;
    height: 18px;
}
```

FILE: chart.js
```js
const svg = document.getElementById('chart');
const step = 8.557;
const base = 415;

// bar index, high, low, body top, body bottom, filled
const candles = [
    [0, 19, 31, 19, 31, 1],
    [1, 8, 67, 31, 67, 1],
    [2, 54, 133, 60, 112, 1],
    [3, 35, 112, 48, 112, 0],
    [4, 29, 69, 35, 48, 0],
    [5, 22, 64, 35, 45, 1],
    [6, 10, 52, 25, 41, 0],
    [7, 13, 35, 25, 33, 1],
    [8, 17, 45, 18, 33, 0],
    [9, 14, 66, 18, 50, 1],
    [10, 43, 68, 49, 53, 1],
    [11, 53, 94, 54, 78, 1],
    [12, 73, 110, 78, 96, 1],
    [13, 44, 109, 49, 98, 0],
    [14, 21, 73, 42, 51, 0],
    [15, 45, 112, 46, 78, 1],
    [16, 77, 135, 77, 126, 1],
    [17, 125, 194, 126, 143, 1],
    [18, 91, 160, 100, 148, 0],
    [19, 92, 101, 92, 101, 0],
    [76, 319, 332, 319, 332, 0],
    [77, 316, 370, 321, 351, 1],
    [78, 341, 364, 348, 354, 1],
    [79, 339, 359, 341, 357, 0]
];

const volumes = [
    35, 42, 30, 37, 27, 29, 25, 19, 24, 25, 34, 29, 30, 34, 36, 35, 34, 34, 31, 16,
    28, 32, 31, 29, 38, 35, 30, 30, 32, 29, 30, 26, 31, 25, 22, 25, 20, 23, 21, 27,
    28, 31, 18, 26, 24, 40, 26, 22, 21, 19, 28, 25, 20, 28, 23, 22, 23, 24, 21, 16,
    25, 17, 26, 23, 28, 22, 20, 20, 19, 23, 27, 32, 24, 26, 25, 32, 24, 21, 10
];

let out = '';

function line(x1, y1, x2, y2, color) {
    out += `<line x1="${x1}" y1="${y1}" x2="${x2}" y2="${y2}" stroke="${color}"/>`;
}

function text(x, y, value) {
    out += `<text x="${x}" y="${y}">${value}</text>`;
}

// current price
line(0, 341.5, 847, 341.5, '#5b6570');

candles.forEach(([i, high, low, top, bottom, filled]) => {
    const x = Math.round(i * step - 1) + 0.5;
    line(x, high, x, low, '#0a7a0a');
    out += `<rect x="${x - 2.5}" y="${top + 0.5}" width="5" height="${bottom - top}" fill="${filled ? '#fff' : '#000'}" stroke="${filled ? '#1fb51f' : '#0a8a0a'}"/>`;
});

volumes.forEach((h, i) => {
    const x = Math.round((i + 1) * step - 1) + 0.5;
    line(x, base - h, x, base, '#22a822');
});

// axes
line(0, base + 0.5, 847, base + 0.5, '#999');
line(847.5, 0, 847.5, base + 1, '#999');

for (let n = 0; n < 24; n++) {
    const y = Math.round(n * 17.26) + 0.5;
    line(847, y, 850, y, '#999');
    text(850, Math.max(y + 2, 4), (3360.15 - n * 0.42).toFixed(2));
}
out += '<rect x="849" y="338" width="21" height="7" fill="#7d8794"/>';
text(850, 343.5, '3351.86');

for (let n = 0; n < 20; n++) {
    const x = n * step * 4 - 1;
    const minutes = 18 * 60 + 49 + n * 4;
    const label = Math.floor(minutes / 60) + ':' + String(minutes % 60).padStart(2, '0');
    line(Math.round(x) + 0.5, base, Math.round(x) + 0.5, base + 3, '#999');
    text(x + 1, 422, '11 Jul ' + (n ? label : '2025'));
}

// chart caption
out += '<rect x="2" y="3" width="4" height="5" fill="#f08a80"/><rect x="6" y="3" width="4" height="5" fill="#6fb2ea"/>';
out += '<path d="M13 3H16V5L18 7 20 3H21V8H13Z" fill="#e9eef4"/><path d="M13 5H16V8H13Z" fill="#e8503a"/><path d="M17 3H20V5H17Z" fill="#3f8fd0"/>';
text(24, 7, 'GOLD#, M1:&#160; GOLD');

svg.innerHTML = out;
```
